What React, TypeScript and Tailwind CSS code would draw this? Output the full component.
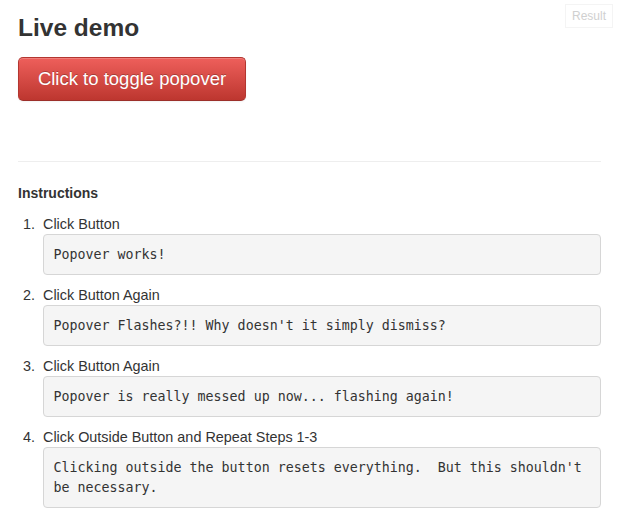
const steps = [
  { label: "Click Button", note: "Popover works!" },
  { label: "Click Button Again", note: "Popover Flashes?!! Why doesn't it simply dismiss?" },
  { label: "Click Button Again", note: "Popover is really messed up now... flashing again!" },
  {
    label: "Click Outside Button and Repeat Steps 1-3",
    note: "Clicking outside the button resets everything.  But this shouldn't be necessary.",
  },
];

export default function App() {
  return (
    <div className="relative min-h-[524px] bg-white px-[18px] pt-2 text-[14px] leading-[20px] text-[#333] font-['Liberation_Sans',Arial,sans-serif]">
      <div className="absolute right-[6px] top-[4px] border border-[#f4f4f4] bg-white px-[6px] py-[3px] text-[12px] leading-[16px] text-[#d0d0d0]">
        Result
      </div>

      <h3 className="text-[24.5px] font-bold leading-[40px]">Live demo</h3>

      <button className="mt-[9px] w-[228px] rounded-[5px] border border-[#b33630] border-b-[#9c2f2a] bg-gradient-to-b from-[#ee5f5b] to-[#bd362f] py-[11px] text-center text-[18.5px] leading-[20px] text-white shadow-[inset_0_1px_0_rgba(255,255,255,0.2),0_1px_2px_rgba(0,0,0,0.05)] [text-shadow:0_-1px_0_rgba(0,0,0,0.25)]">
        Click to toggle popover
      </button>

      <hr className="mt-[60px] border-t border-[#eee]" />

      <h5 className="mt-[21px] font-bold">Instructions</h5>

      <ol className="mt-[11px] ml-[25px] text-[14.4px]">
        {steps.map((s, i) => (
          <li key={i} className="flex flex-col">
            <div className="flex">
              <span className="-ml-[25px] w-[25px] pr-[8px] text-right">{i + 1}.</span>
              <span>{s.label}</span>
            </div>
            <pre className="mb-[10px] whitespace-pre-wrap rounded-[4px] border border-[#d6d6d6] bg-[#f5f5f5] p-[9.5px] text-[13.3px] leading-[20px] text-[#333] font-['DejaVu_Sans_Mono',monospace]">
              {s.note}
            </pre>
          </li>
        ))}
      </ol>
    </div>
  );
}
